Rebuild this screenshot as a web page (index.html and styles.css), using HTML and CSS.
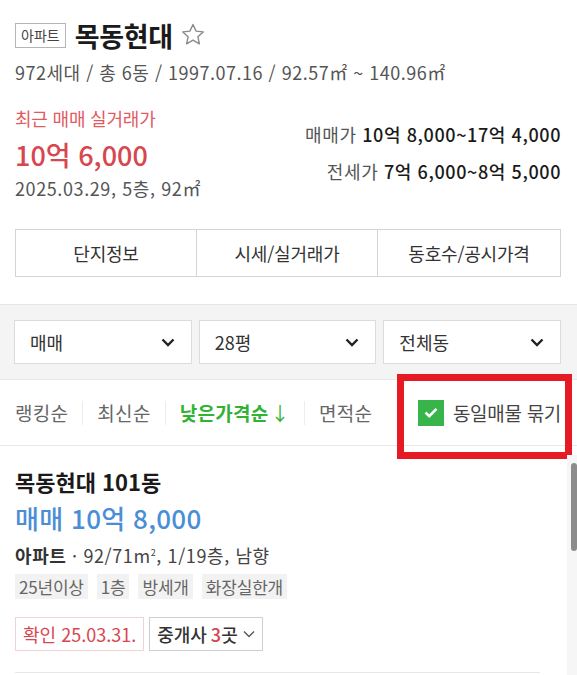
FILE: index.html
```html
<!DOCTYPE html>
<html lang="ko">
<head>
  <meta charset="UTF-8">
  <title>목동현대 - 매물</title>
  <meta name="viewport" content="width=device-width, initial-scale=1.0">
  <link rel="stylesheet" href="styles.css">
</head>
<body>
  <header class="danji">
    <div class="danji-title">
      <span class="badge">아파트</span>
      <h1>목동현대</h1>
      <svg class="star" width="24" height="22" viewBox="0 0 24 22">
        <path d="M12 1.5l3.1 6.6 7.1.8-5.3 4.9 1.5 7-6.4-3.7-6.4 3.7 1.5-7L1.8 8.9l7.1-.8z" fill="none" stroke="#8a8a8a" stroke-width="1.4" stroke-linejoin="round"/>
      </svg>
    </div>
    <p class="danji-info">972세대 / 총 6동 / 1997.07.16 / 92.57㎡ ~ 140.96㎡</p>

    <div class="price-summary">
      <div class="recent">
        <p class="recent-label">최근 매매 실거래가</p>
        <p class="recent-price">10억 6,000</p>
        <p class="recent-date">2025.03.29, 5층, 92㎡</p>
      </div>
      <div class="range">
        <p><span>매매가</span> <strong>10억 8,000~17억 4,000</strong></p>
        <p><span>전세가</span> <strong>7억 6,000~8억 5,000</strong></p>
      </div>
    </div>

    <nav class="tabs">
      <a href="#">단지정보</a>
      <a href="#">시세/실거래가</a>
      <a href="#">동호수/공시가격</a>
    </nav>
  </header>

  <section class="filters">
    <div class="select">매매 <svg width="14" height="9" viewBox="0 0 14 9"><path d="M1.5 1.5l5.5 5.5 5.5-5.5" fill="none" stroke="#222" stroke-width="2.4"/></svg></div>
    <div class="select">28평 <svg width="14" height="9" viewBox="0 0 14 9"><path d="M1.5 1.5l5.5 5.5 5.5-5.5" fill="none" stroke="#222" stroke-width="2.4"/></svg></div>
    <div class="select">전체동 <svg width="14" height="9" viewBox="0 0 14 9"><path d="M1.5 1.5l5.5 5.5 5.5-5.5" fill="none" stroke="#222" stroke-width="2.4"/></svg></div>
  </section>

  <div class="sort-bar">
    <ul class="sort">
      <li>랭킹순</li>
      <li>최신순</li>
      <li class="active">낮은가격순<span class="arrow">↓</span></li>
      <li>면적순</li>
    </ul>
    <label class="group-check">
      <span class="checkbox">
        <svg width="14" height="11" viewBox="0 0 14 11"><path d="M1.5 5.5l3.8 3.6L12.5 1.8" fill="none" stroke="#fff" stroke-width="2.6"/></svg>
      </span>
      동일매물 묶기
    </label>
    <div class="highlight"></div>
  </div>

  <article class="item">
    <h2>목동현대 101동</h2>
    <p class="item-price">매매 10억 8,000</p>
    <p class="item-spec"><strong>아파트</strong> · 92/71m<sup>2</sup>, 1/19층, 남향</p>
    <div class="tags">
      <span>25년이상</span>
      <span>1층</span>
      <span>방세개</span>
      <span>화장실한개</span>
    </div>
    <div class="item-buttons">
      <span class="confirm">확인 25.03.31.</span>
      <span class="agents">중개사 <em>3</em>곳 <svg width="12" height="8" viewBox="0 0 12 8"><path d="M1 1.5l5 5 5-5" fill="none" stroke="#555" stroke-width="1.3"/></svg></span>
    </div>
  </article>

  <div class="scroll-track"><div class="scroll-thumb"></div></div>
</body>
</html>
```

FILE: styles.css
```css
body {
  margin: 0;
  font-family: "Noto Sans CJK KR", "Noto Sans", sans-serif;
  background: #fff;
  color: #222;
  overflow: hidden;
}

p {
  margin: 0;
}

.danji {
  padding: 17px 16px 0 15px;
}

.danji-title {
  display: flex;
  align-items: center;
  height: 36px;
}

.badge {
  border: 1px solid #b5b5b5;
  font-size: 14px;
  line-height: 23px;
  padding: 0 5px;
  color: #444;
  margin-right: 9px;
}

.danji-title h1 {
  margin: 0;
  font-size: 27px;
  font-weight: bold;
  color: #1a1a1a;
  letter-spacing: -0.3px;
}

.star {
  margin-left: 8px;
  margin-top: -2px;
}

.danji-info {
  margin-top: 7px;
  font-size: 18px;
  line-height: 24px;
  color: #555;
  letter-spacing: 0.5px;
}

.price-summary {
  display: flex;
  justify-content: space-between;
  margin-top: 22px;
}

.recent-label {
  font-size: 18px;
  line-height: 24px;
  color: #df5b62;
  letter-spacing: -0.2px;
}

.recent-price {
  margin-top: 7px;
  font-size: 27px;
  line-height: 36px;
  font-weight: 500;
  color: #d8464f;
  letter-spacing: 0;
}

.recent-date {
  margin-top: 3px;
  font-size: 18px;
  line-height: 24px;
  color: #555;
  letter-spacing: 0.6px;
}

.range {
  padding-top: 16px;
  text-align: right;
}

.range p {
  font-size: 18px;
  line-height: 24px;
  margin-bottom: 13px;
  letter-spacing: 0.6px;
}

.range span {
  color: #555;
}

.range strong {
  font-weight: 500;
  color: #1a1a1a;
}

.tabs {
  display: flex;
  margin-top: 29px;
  border: 1px solid #d4d4d4;
  height: 46px;
}

.tabs a {
  flex: 0 0 180px;
  text-align: center;
  font-size: 18px;
  line-height: 46px;
  color: #333;
  text-decoration: none;
  letter-spacing: -0.2px;
}

.tabs a:last-child {
  flex: 1 1 0;
}

.tabs a + a {
  border-left: 1px solid #d4d4d4;
}

.filters {
  display: flex;
  gap: 7px;
  margin-top: 27px;
  padding: 15px 16px 15px 14px;
  background: #f4f4f4;
  border-top: 1px solid #e4e4e4;
}

.select {
  flex: 1 1 0;
  height: 42px;
  display: flex;
  align-items: center;
  justify-content: space-between;
  padding: 0 16px 0 15px;
  background: #fff;
  border: 1px solid #dcdcdc;
  font-size: 18px;
  color: #333;
}

.sort-bar {
  position: relative;
  display: flex;
  align-items: center;
  height: 65px;
  padding: 0 16px 0 15px;
  border-top: 1px solid #e8e8e8;
  border-bottom: 1px solid #e8e8e8;
}

.sort {
  display: flex;
  list-style: none;
  margin: 0;
  padding: 0;
  flex: 1;
}

.sort li {
  font-size: 19px;
  color: #666;
  letter-spacing: 0.3px;
  line-height: 24px;
}

.sort li + li {
  margin-left: 14px;
  padding-left: 14px;
  border-left: 1px solid #ededed;
}

.sort li.active {
  color: #30b334;
  font-weight: bold;
}

.sort .arrow {
  font-weight: normal;
  margin-left: 2px;
}

.group-check {
  display: flex;
  align-items: center;
  font-size: 19px;
  color: #444;
  letter-spacing: -0.3px;
}

.checkbox {
  width: 26px;
  height: 26px;
  background: #38b54a;
  display: flex;
  align-items: center;
  justify-content: center;
  margin-right: 9px;
}

.highlight {
  position: absolute;
  left: 397px;
  top: -6px;
  width: 161px;
  height: 71px;
  border: 7px solid #e51a22;
}

.item {
  padding: 20px 16px 0 15px;
}

.item h2 {
  margin: 0;
  font-size: 22px;
  line-height: 30px;
  font-weight: bold;
  color: #1a1a1a;
  letter-spacing: 0;
}

.item-price {
  margin-top: 6px;
  font-size: 26px;
  line-height: 32px;
  font-weight: 500;
  color: #4a8ed6;
  letter-spacing: 0.3px;
}

.item-spec {
  margin-top: 7px;
  font-size: 18px;
  line-height: 24px;
  color: #444;
  letter-spacing: 0.6px;
}

.item-spec strong {
  color: #333;
}

.item-spec sup {
  font-size: 9px;
}

.tags {
  display: flex;
  gap: 9px;
  margin-top: 7px;
}

.tags span {
  background: #f2f2f2;
  color: #666;
  font-size: 17px;
  line-height: 25px;
  padding: 0 4px;
  letter-spacing: -0.2px;
}

.item-buttons {
  display: flex;
  gap: 5px;
  margin-top: 18px;
  padding-bottom: 21px;
  width: 525px;
  border-bottom: 1px solid #e8e8e8;
}

.item-buttons span {
  display: flex;
  align-items: center;
  height: 32px;
  padding: 0 7px;
  font-size: 18px;
  letter-spacing: 0;
}

.confirm {
  border: 1px solid #efd3d5;
  color: #d8464f;
}

.agents {
  border: 1px solid #cfcfcf;
  color: #333;
  font-weight: 500;
}

.agents em {
  font-style: normal;
  color: #d8464f;
  margin-left: 4px;
}

.agents svg {
  margin-left: 5px;
}

.scroll-track {
  position: absolute;
  right: 0;
  top: 455px;
  width: 10px;
  height: 220px;
  background: #f6f6f6;
}

.scroll-thumb {
  margin: 8px 0 0 4px;
  height: 88px;
  background: #8c8c8c;
  border-radius: 4px;
}
```
